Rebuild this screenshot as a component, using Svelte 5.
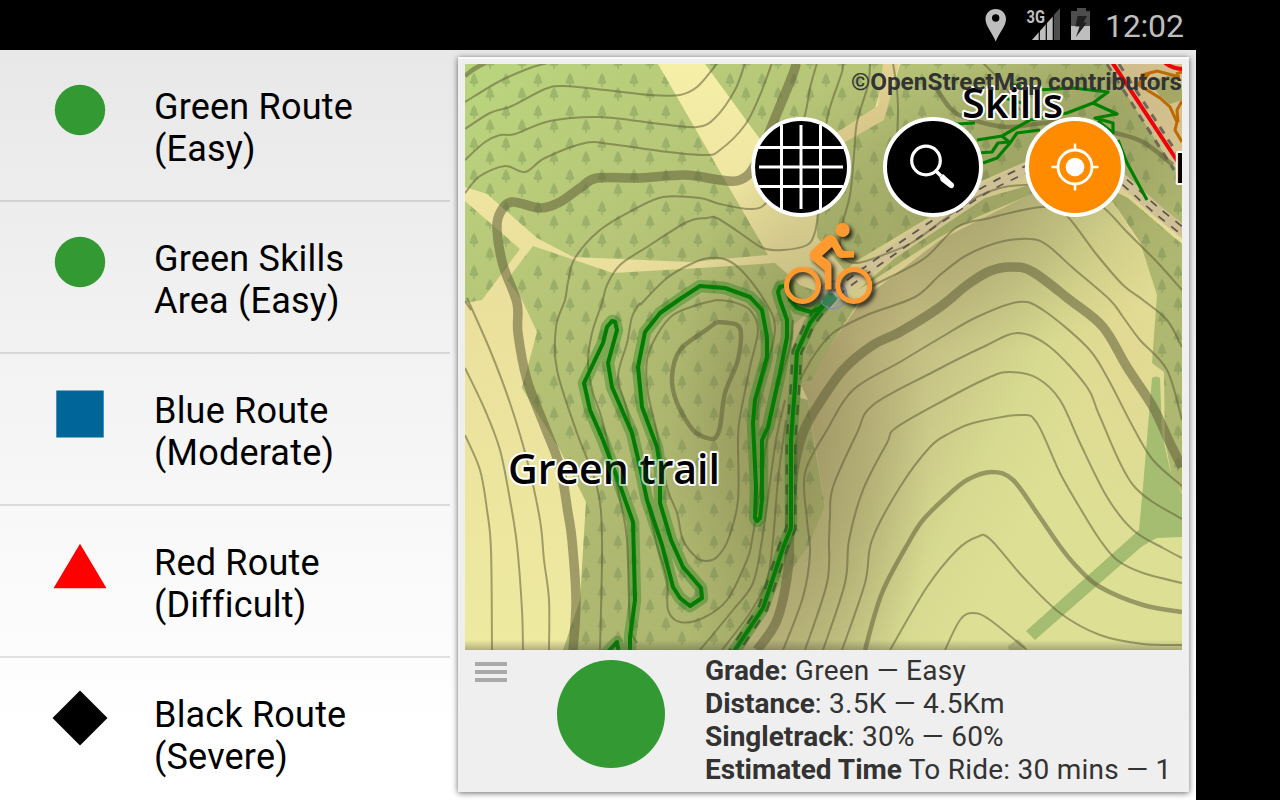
<script>
  const routes = [
    { name: 'Green Route', grade: '(Easy)', shape: 'circle' },
    { name: 'Green Skills', grade: 'Area (Easy)', shape: 'circle' },
    { name: 'Blue Route', grade: '(Moderate)', shape: 'square' },
    { name: 'Red Route', grade: '(Difficult)', shape: 'triangle' },
    { name: 'Black Route', grade: '(Severe)', shape: 'diamond' }
  ];

  // Turns "x,y x,y ..." into a smooth Catmull-Rom curve.
  function curve(text) {
    const p = text.trim().split(/\s+/).map((s) => s.split(',').map(Number));
    let d = `M${p[0]}`;
    for (let i = 0; i < p.length - 1; i++) {
      const a = p[i - 1] ?? p[i];
      const b = p[i];
      const c = p[i + 1];
      const e = p[i + 2] ?? c;
      d += `C${b[0] + (c[0] - a[0]) / 6},${b[1] + (c[1] - a[1]) / 6} ${c[0] - (e[0] - b[0]) / 6},${c[1] - (e[1] - b[1]) / 6} ${c}`;
    }
    return d;
  }

  const contours = [
    '465,102 500,81 530,68 548,63',
    '465,129 490,113 512,106 545,89 565,86 605,90 650,95 680,95 697,87 712,70 717,63',
    '465,160 485,142 500,135 515,134 550,121 600,117 660,124 697,127 715,118 735,90 745,63',
    '465,193 480,176 505,166 525,172 545,158 585,143 610,144 660,151 705,155 720,150 745,125 760,95 772,63',
    '600,650 602,540 597,487 577,433 557,370 556,327 565,300 568,282 575,258 600,230 633,210 663,197 700,198 720,204 750,209 767,202 790,165 805,115 810,88 817,63',
    '637,643 630,623 627,540 620,500 603,423 593,393 588,363 592,333 602,303 607,285 620,265 647,247 687,222 707,218 717,218 740,233 763,248 783,250 807,245 815,232 818,212 822,150 828,115 833,98 842,72 843,63',
    '640,305 667,278 693,263 710,258 727,260 743,272 763,298 774,320 773,343 760,390 757,420',
    '640,303 632,317 627,343 618,377 627,410 640,470 647,500 657,545 667,580 668,610 680,622 703,618 727,600 747,560 752,540 760,490 767,440 777,390 789,350 793,320',
    '717,300 697,305 673,315 657,335 647,360 648,393 657,433 667,487 677,513 683,540 697,558 707,561 717,557 728,540 738,500 738,440 740,417 750,367 758,330 750,310 733,302 717,300',
    '467,298 490,350 510,403 527,460 540,520 544,560 549,600 549,650',
    '465,368 485,410 500,450 510,500 517,545 522,610 523,650',
    '465,435 480,470 487,510 491,550 492,650',
    '870,63 868,85 857,122 854,155 850,195 842,225 840,245 842,257 857,263 883,255 913,242 950,215 977,197 1000,188 1025,185 1060,186 1100,205 1127,232 1157,262 1182,290',
    '893,63 897,90 898,110 897,140',
    '983,63 1003,84 1020,110',
    '868,288 890,277 925,258 957,227 990,218 1023,210 1050,207 1068,217 1097,255 1123,285 1143,300 1167,320 1182,347',
    '800,380 813,357 833,333 867,315 915,297 940,275 967,255 1000,242 1030,239 1047,245 1073,268 1110,300 1123,317 1140,340 1167,370 1182,420',
    '783,650 803,597 810,553 807,520 805,473 827,430 853,390 900,362 940,338 977,317 1018,302 1043,310 1087,347 1107,377 1133,427 1153,460 1182,486',
    '805,650 827,583 829,540 830,517 833,487 857,433 873,405 933,372 983,347 1018,333 1050,347 1087,387 1100,417 1133,485 1182,519',
    '823,650 845,583 849,540 863,490 887,443 897,427 950,397 990,377 1010,372 1037,378 1060,400 1080,443 1107,497 1133,530 1163,548 1182,558',
    '842,650 865,583 872,540 900,487 930,447 950,433 973,423 1020,415 1037,423 1060,473 1083,513 1100,540 1117,560 1143,573 1182,583',
    '890,650 927,587 957,550 977,537 990,539 1023,577 1060,613 1100,635 1143,644 1182,645',
    '945,650 960,620 973,613 990,620 1027,650',
    '700,650 733,610 753,583 762,540 769,490 776,440 785,400',
    '722,650 750,613 767,580 773,540 778,480 786,420',
    '465,301 471,310'
  ];
  const mediumContours = [
    '465,76 474,69 485,63',
    '717,322 706,330 680,350 672,377 677,403 693,430 707,438 715,438 720,427 725,393 737,363 741,337 737,325 717,322',
    '865,650 882,593 910,540 923,520 945,498 967,480 992,472 1013,480 1037,513 1059,545 1077,567 1100,587 1143,605 1182,612',
    '935,86 950,108 967,118 1007,127 1060,122 1115,133 1143,142 1173,165'
  ];
  const thickContours = [
    '573,650 576,600 572,540 568,513 560,467 545,427 527,380 518,333 517,303 503,265 497,230 500,213 512,202 540,208 560,202 580,188 597,178 640,178 685,175 720,180 740,180 755,165 775,118 793,74 796,63',
    '757,650 777,620 788,570 790,520 794,470 803,433 817,407 843,370 873,345 900,332 940,307 967,285 990,271 1012,267 1033,272 1070,300 1103,327 1127,367 1153,407 1170,443 1182,467'
  ];
  const trail =
    'M630,650 630,637 635,600 633,522 618,480 603,440 590,410 584,383 603,343 607,327 612,321 615,322 617,330 608,363 612,387 632,433 640,467 647,500 662,545 673,587 680,598 690,606 702,598 701,588 683,567 671,540 660,503 660,467 657,447 642,407 638,367 645,332 660,313 680,299 700,286 725,288 750,297 762,310 767,337 767,357 755,400 753,423 756,487 755,518 757,521 760,518 762,500 762,440 768,427 780,373 787,337 787,320 780,300 778,292 780,287 787,285 790,300 797,308 811,312 820,308 833,294M606,654 617,642 619,654';
  const mainTrail = 'M833,296 820,310 810,323 797,352 795,387 791,440 791,528 783,548 763,608 733,653';
  const skillsTrail =
    'M983,163 997,158 1010,143 1017,133 1040,130M977,140 1002,136 1030,120 1067,113 1093,103 1108,92 1073,88 1037,90 1010,84M1002,136 1010,143M1093,103 1117,114 1095,118 1113,123 1113,133 1098,121M1118,140 1127,163 1147,200M978,153 992,152 998,143 1008,142M950,122 957,124 975,123M1005,98 1022,103';
  const road = curve('826,305 845,286 895,250 945,216 985,190 1025,170 1065,155 1100,163 1128,185 1155,209 1190,237');
</script>

{#snippet marker(shape)}
  <svg class="marker" viewBox="0 0 60 60">
    {#if shape === 'circle'}
      <circle cx="30" cy="30" r="25.2" fill="#339933" />
    {:else if shape === 'square'}
      <rect x="6.3" y="6.5" width="47.4" height="47" fill="#006699" />
    {:else if shape === 'triangle'}
      <path d="M30 7.800L56.500 52.300H3.500Z" fill="#f00" />
    {:else}
      <path d="M30 2.500L57.500 30L30 57.500L2.500 30Z" fill="#000" />
    {/if}
  </svg>
{/snippet}

<div class="screen">
  <header class="status">
    <svg class="status-icons" width="110" height="50" viewBox="980 0 110 50">
      <path d="M995.700 9C989.600 9 985.500 13.500 985.500 19.200C985.500 26 992.500 33 995.700 41.500C999 33 1006 26 1006 19.200C1006 13.500 1001.800 9 995.700 9ZM995.700 14.300A3.700 3.700 0 1 1 995.700 21.700A3.700 3.700 0 1 1 995.700 14.300Z" fill="#bebebe" fill-rule="evenodd" />
      <path d="M1032 40L1060 8V40Z" fill="#4d4d4d" />
      <path d="M1032 40L1053 16.500V40Z" fill="#bebebe" />
      <path d="M1039.300 25V40M1046.300 18V40M1053.300 14V40" stroke="#000" stroke-width="1.200" />
      <rect x="1025" y="8" width="20" height="15.500" fill="#000" />
      <text x="1026.500" y="23" font-size="18.500" textLength="18.500" lengthAdjust="spacingAndGlyphs" font-weight="700" fill="#bebebe">3G</text>
      <path d="M1077 8H1086V11H1092V26H1071V11H1077Z" fill="#4d4d4d" />
      <path d="M1071 26H1092V40H1071Z" fill="#bebebe" />
      <path d="M1077.500 16H1087L1083.500 22.500H1087L1076 37L1079.500 26.500H1075.500Z" fill="#202020" />
    </svg>
    <span class="clock">12:02</span>
  </header>

  <main>
    <nav>
      {#each routes as r}
        <div class="route">
          {@render marker(r.shape)}
          <div class="route-name">{r.name}<br />{r.grade}</div>
        </div>
      {/each}
    </nav>

    <section class="card">
      <div class="map">
        <svg width="717" height="586" viewBox="465 64 717 586">
          <defs>
            <linearGradient id="field" x1="0" y1="0" x2="0" y2="1">
              <stop offset="0" stop-color="#f5efa8" />
              <stop offset=".35" stop-color="#eadf9c" />
              <stop offset="1" stop-color="#eeeaa0" />
            </linearGradient>
            <linearGradient id="wood" gradientUnits="userSpaceOnUse" x1="500" y1="64" x2="760" y2="420">
              <stop offset="0" stop-color="#bad47d" />
              <stop offset=".45" stop-color="#b7c678" />
              <stop offset="1" stop-color="#afb870" />
            </linearGradient>
            <linearGradient id="eastfield" gradientUnits="userSpaceOnUse" x1="810" y1="380" x2="1040" y2="500">
              <stop offset="0" stop-color="#bfb47c" />
              <stop offset=".35" stop-color="#c5c184" />
              <stop offset=".75" stop-color="#d7da90" />
              <stop offset="1" stop-color="#dddf95" />
            </linearGradient>
            <radialGradient id="shade"><stop offset="0" stop-color="#5a5030" stop-opacity=".3" /><stop offset=".5" stop-color="#5a5030" stop-opacity=".17" /><stop offset="1" stop-color="#5a5030" stop-opacity="0" /></radialGradient>
            <radialGradient id="glow"><stop offset="0" stop-color="#e3d893" stop-opacity=".8" /><stop offset="1" stop-color="#e3d893" stop-opacity="0" /></radialGradient>
            <linearGradient id="edge" x1="0" y1="0" x2="0" y2="1"><stop offset="0" stop-color="#444" stop-opacity="0" /><stop offset="1" stop-color="#444" stop-opacity=".35" /></linearGradient>
            <pattern id="trees" x="466" y="70" width="32" height="32" patternUnits="userSpaceOnUse">
              <g fill="#5a7844" opacity=".3">
                <path d="M8 2.800Q9 4 11 8L10.700 9L12.500 12.300Q12.500 14 8.800 14V17H7.200V14Q3.500 14 3.500 12.300L5.300 9L5 8Q7 4 8 2.800Z" />
                <path d="M24 16.800Q25 18 27 22L26.700 23L28.500 26.300Q28.500 28 24.800 28V31H23.200V28Q19.500 28 19.500 26.300L21.300 23L21 22Q23 18 24 16.800Z" />
              </g>
            </pattern>
            <path id="woods" d="M465,64H658L768,255L690,262L573,257L537,238L487,194L465,187ZM705,64H888L875,108L838,132L800,150H768ZM900,64H1107L1170,162L1182,172V226L1128,177L1075,150L1025,162L977,183L933,215L853,263L846,272L817,237V215L838,145L883,120ZM465,201L520,249L482,300L465,303ZM533,246L613,273L700,268L775,263L800,285L840,300H860L832,343L812,380L800,383V398L808,400L815,447L825,507L808,547L770,600L743,650H563L580,600L583,550L586,502L560,450L522,388L537,332L522,300L507,280ZM858,290L940,237L977,217L1025,197L1075,180L1113,202L1140,242L1157,295L1152,363L1164,372V375L1165,440L1172,478L1182,492V244L1128,198L1075,172L985,198L895,258Z" />
          </defs>

          <rect x="465" y="64" width="717" height="586" fill="url(#field)" />
          <path d="M800,383L832,343L862,300L940,240L1025,197L1075,180L1113,202L1182,320V650H740L770,600L808,547L825,507L808,400Z" fill="url(#eastfield)" />
          <ellipse cx="1130" cy="350" rx="95" ry="200" fill="url(#glow)" />
          <use href="#woods" fill="url(#wood)" />
          <use href="#woods" fill="url(#trees)" />
          <path d="M1152,378Q1156,375 1160,378L1162,433L1170,470L1182,494V537L1157,538Q1150,541 1140,548L1035,640L1026,631L1139,530L1143,487Z" fill="#a5bd70" />
          <path d="M1008,646L1018,639L1026,647L1022,650H1009Z" fill="#999d68" opacity=".5" />
          <path d="M788,395L794,325L812,308L797,352L794,385V400Z" fill="#d6c88e" />
          <path d="M1107,64H1182V172L1170,162Z" fill="#e3cf9a" />
          <path d="M1150,82L1172,74L1182,90V100L1170,104L1160,96Z" fill="#afb46c" />
          <path d="M883,64L878,106L838,132V146L884,120L899,64Z" fill="#e5d293" />

          <ellipse cx="965" cy="205" rx="230" ry="150" fill="url(#shade)" opacity=".75" />
          <ellipse cx="800" cy="470" rx="130" ry="330" fill="url(#shade)" />
          <ellipse cx="1110" cy="100" rx="170" ry="130" fill="url(#shade)" opacity=".6" />
          <ellipse cx="735" cy="370" rx="130" ry="200" fill="url(#shade)" opacity=".35" />

          <g fill="none">
            <path d={road} stroke="#cfc096" stroke-width="12" />
            <path d={road} stroke="#5b554a" stroke-width="8.500" stroke-dasharray="8 8" />
            <path d={road} stroke="#cfc096" stroke-width="5" />
            <path d="M1107,64L1174,170" stroke="#706a58" stroke-width="3" stroke-dasharray="8 7" />
            <path d="M1119,64L1182,161" stroke="#706a58" stroke-width="3" stroke-dasharray="8 7" />
            <g stroke="#5f5d38" stroke-opacity=".54" stroke-linejoin="round">
              {#each contours as c}<path d={curve(c)} stroke-width="2" />{/each}
              {#each mediumContours as c}<path d={curve(c)} stroke-width="4.500" />{/each}
              {#each thickContours as c}<path d={curve(c)} stroke-width="9.500" />{/each}
            </g>
            <path d={mainTrail} stroke="#4c5132" stroke-width="11" stroke-dasharray="10 10" opacity=".85" />
            <path d={mainTrail} stroke="#8b9a5c" stroke-width="6" />
            <g stroke="#008000" stroke-width="4" stroke-linejoin="round">
              <path d={trail} />
              <path d={mainTrail} />
              <path d={skillsTrail} stroke-width="3.200" />
            </g>
            <path d="M1180,77L1157,71L1142,75L1139,85L1160,98L1170,107L1177,122L1175,130L1182,142M1182,101L1177,110L1178,122M1182,72L1176,74M1140,84Q1146,78 1150,72" stroke="#bd6a00" stroke-width="3" />
            <path d="M1112,62L1178,162" stroke="#f00008" stroke-width="4" />
            <path d="M1165,63Q1173,69 1183,69" stroke="#f00008" stroke-width="4" />
          </g>

          <g class="label">
            <text x="508" y="483.500" font-size="42" textLength="212" lengthAdjust="spacingAndGlyphs">Green trail</text>
            <text x="962" y="118" font-size="41" textLength="101" lengthAdjust="spacingAndGlyphs">Skills</text>
            <text x="1174" y="183" font-size="42">R</text>
          </g>
          <g fill="none" stroke="#087408" stroke-opacity=".32" stroke-width="12.500" stroke-linejoin="round">
            <path d={trail} />
            <path d={mainTrail} />
          </g>

          <circle cx="833" cy="295" r="14" fill="#8c94b8" fill-opacity=".35" stroke="#7c86d8" stroke-width="1" />
          <path d="M823,301L832,293L838,298L828,306Z" fill="#338060" opacity=".7" />
          <g class="rider">
            <circle cx="802.500" cy="285.500" r="16" fill="none" stroke="#ff9a30" stroke-width="5" />
            <circle cx="853.800" cy="285.500" r="16" fill="none" stroke="#ff9a30" stroke-width="5" />
            <circle cx="842.700" cy="230" r="7" fill="#ff9a30" />
            <path d="M811,251Q808,256 812,260L824,270Q825,271 825,274V289.500H831.500V266Q831.500,263 829,261L822,256L832,247L837,255.500Q839,258 842,258L854,257.500V251H845Q843,251 842,249L836,238Q832,233 827,236Z" fill="#ff9a30" />
          </g>
          <rect x="465" y="640" width="717" height="10" fill="url(#edge)" />
          <text class="credit" x="851" y="90" font-size="24.500" textLength="331" lengthAdjust="spacingAndGlyphs">©OpenStreetMap contributors</text>
        </svg>

        <button class="tool grid" aria-label="Grid">
          <svg viewBox="-50 -50 100 100">
            <circle r="48" fill="#000" stroke="#fff" stroke-width="4" />
            <path d="M-42 -19.500H42M-42 0H42M-42 19.500H42M-19.500 -42V42M0 -42V42M19.500 -42V42" stroke="#fff" stroke-width="3" />
          </svg>
        </button>
        <button class="tool search" aria-label="Search">
          <svg viewBox="-50 -50 100 100">
            <circle r="48" fill="#000" stroke="#fff" stroke-width="4" />
            <circle cx="-7" cy="-6.500" r="14.300" fill="none" stroke="#fff" stroke-width="3.200" />
            <path d="M3 4L8 9" stroke="#fff" stroke-width="3.500" />
            <path d="M6.500 10.500L10 7L20.500 16.500Q22 18 20.500 20.300Q18.500 22 16.500 20.500L8 14Z" fill="#fff" />
          </svg>
        </button>
        <button class="tool locate" aria-label="Locate">
          <svg viewBox="-50 -50 100 100">
            <circle r="48" fill="#ff8c00" stroke="#fff" stroke-width="4" />
            <circle r="17" fill="none" stroke="#fff" stroke-width="2.800" />
            <circle r="9.300" fill="#fff" />
            <path d="M0 -23.500V-17M0 17V23.500M-23.500 0H-17M17 0H23.500" stroke="#fff" stroke-width="2.500" />
          </svg>
        </button>
      </div>

      <div class="info">
        <div class="handle"><i></i><i></i><i></i></div>
        <div class="grade"></div>
        <div class="facts">
          <div><b>Grade:</b> Green — Easy</div>
          <div><b>Distance</b>: 3.5K — 4.5Km</div>
          <div><b>Singletrack</b>: 30% — 60%</div>
          <div><b>Estimated Time</b> To Ride: 30 mins — 1</div>
        </div>
      </div>
    </section>
  </main>
</div>

<style>
  :global(body) { background: #000; overflow: hidden; }
  .screen { width: 1280px; height: 800px; background: #000; overflow: hidden; font-family: Roboto, sans-serif; }
  .status { width: 1196px; height: 50px; display: flex; justify-content: flex-end; align-items: center; }
  .clock { width: 91px; margin-left: 15px; color: #bebebe; font-size: 32px; line-height: 50px; padding-top: 1px; letter-spacing: -.2px; white-space: nowrap; box-sizing: border-box; }
  main { width: 1196px; height: 750px; display: flex; background: linear-gradient(#e8e8e8, #fff 90%); }
  nav { width: 450px; height: 750px; overflow: hidden; margin-right: 8px; flex: none; }
  .route { height: 152px; box-sizing: border-box; display: flex; border-bottom: 2px solid rgba(0, 0, 0, .11); }
  .marker { width: 60px; height: 60px; margin: 30px 44px 0 50px; flex: none; }
  .route-name { margin-top: 36px; font-size: 36px; line-height: 42px; letter-spacing: .2px; color: #000; white-space: nowrap; }
  .card { width: 731px; height: 735px; margin-top: 7px; padding: 7px; box-sizing: border-box; background: #efefef; flex: none; box-shadow: 0 1px 6px rgba(0, 0, 0, .6), inset 0 2px 0 #fafafa; }
  .map { position: relative; width: 717px; height: 586px; overflow: hidden; }
  .map > svg { display: block; }
  .label { font-family: "Open Sans", sans-serif; font-weight: 600; fill: #000; stroke: #fff; stroke-width: 4px; stroke-linejoin: round; paint-order: stroke; }
  .credit { font-weight: 700; fill: #333; }
  .rider { filter: drop-shadow(3px 3px 2px rgba(0, 0, 0, .8)); }
  .tool { position: absolute; top: 53px; width: 100px; height: 100px; padding: 0; border: 0; background: none; }
  .tool svg { display: block; width: 100px; height: 100px; }
  .grid { left: 286px; }
  .search { left: 418px; }
  .locate { left: 560px; }
  .info { display: flex; height: 135px; }
  .handle { width: 32px; margin: 12px 50px 0 10px; display: flex; flex-direction: column; gap: 4px; }
  .handle i { height: 4px; background: #aaa; }
  .grade { width: 108px; height: 108px; margin: 10px 40px 0 0; border-radius: 50%; background: #339933; }
  .facts { padding-top: 4px; font-size: 28px; line-height: 33px; letter-spacing: .25px; color: #333; white-space: nowrap; }
  .facts b { letter-spacing: 0; }
</style>
